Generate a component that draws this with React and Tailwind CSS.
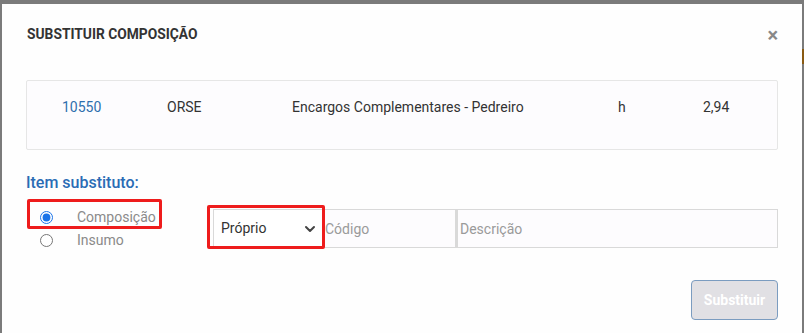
import { useState } from "react";

export default function App() {
  const [tipo, setTipo] = useState("composicao");

  return (
    <div className="w-[804px] h-[333px] bg-[#7b7b7b] pt-[4px] pl-[2px] pr-[2px] overflow-hidden relative" style={{ fontFamily: "Roboto, 'Liberation Sans', sans-serif" }}>
      {/* page behind backdrop */}
      <div className="absolute right-0 top-[49px] w-[2px] h-[15px] bg-[#8a5a12]" />
      <div className="bg-[#fefefe] h-[340px] w-[800px] relative">
        {/* Header */}
        <div className="flex items-center justify-between pl-[25px] pr-[24px] pt-[11px] h-[51px]">
          <h1 className="text-[13.8px] font-bold text-[#333] leading-none">SUBSTITUIR COMPOSIÇÃO</h1>
          <button className="text-[#888] text-[20px] font-bold leading-none">×</button>
        </div>

        {/* Original item */}
        <div className="mx-[24px] mt-[25px] h-[70px] border border-[#e6e6e6] rounded-[2px] bg-[#fdfcfe] flex items-start pt-[16px] text-[14px] text-[#333]">
          <span className="w-[140px] pl-[35px] text-[#2f6fad]">10550</span>
          <span className="w-[125px]">ORSE</span>
          <span className="w-[326px]">Encargos Complementares - Pedreiro</span>
          <span className="w-[85px]">h</span>
          <span>2,94</span>
        </div>

        {/* Substitute */}
        <div className="px-[24px] mt-[25px]">
          <h2 className="text-[16px] font-medium text-[#2a6cb5] leading-none">Item substituto:</h2>
          <div className="flex mt-[14px]">
            <div className="w-[187px] relative pt-[2px]">
              <div className="absolute left-[1px] top-[-6px] w-[135px] h-[30px] border-[3px] border-[#ee1c1c] rounded-[2px]" />
              <label className="flex items-center h-[20px] text-[14px] text-[#8a8a8a]">
                <input type="radio" name="tipo" checked={tipo === "composicao"} onChange={() => setTipo("composicao")} className="w-[13px] h-[13px] ml-[14px] accent-[#1a73e8]" />
                <span className="ml-[24px]">Composição</span>
              </label>
              <label className="flex items-center h-[22px] pt-[4px] text-[14px] text-[#8a8a8a]">
                <input type="radio" name="tipo" checked={tipo === "insumo"} onChange={() => setTipo("insumo")} className="w-[13px] h-[13px] ml-[14px]" />
                <span className="ml-[24px]">Insumo</span>
              </label>
            </div>
            <div className="flex flex-1 h-[39px] mt-[4px]">
              <div className="relative w-[110px]">
                <div className="absolute left-[-6px] top-[-4px] w-[118px] h-[44px] border-[3px] border-[#ee1c1c] rounded-[2px] pointer-events-none" />
                <div className="h-full border border-[#d9d9d9] bg-white flex items-center justify-between pl-[7px] pr-[6px] text-[14px] text-[#333]">
                  <span>Próprio</span>
                  <svg width="12" height="8" viewBox="0 0 12 8" fill="none">
                    <path d="M2 2l4 4 4-4" stroke="#444" strokeWidth="2" strokeLinecap="round" strokeLinejoin="round" />
                  </svg>
                </div>
              </div>
              <input placeholder="Código" className="w-[133px] h-full border border-[#d9d9d9] border-l-0 px-[2px] text-[14px] placeholder-[#9a9a9a] bg-[#fdfcfe] outline-none" />
              <input placeholder="Descrição" className="flex-1 h-full border border-[#d9d9d9] border-l-2 px-[2px] text-[14px] placeholder-[#9a9a9a] bg-[#fdfcfe] outline-none" />
            </div>
          </div>
        </div>

        {/* Footer */}
        <div className="flex justify-end pr-[24px] mt-[31px]">
          <button disabled className="w-[87px] h-[40px] rounded-[4px] bg-[#e1e0e4] border border-[#7b9cc0] text-white font-bold text-[14px]">Substituir</button>
        </div>
      </div>
    </div>
  );
}
